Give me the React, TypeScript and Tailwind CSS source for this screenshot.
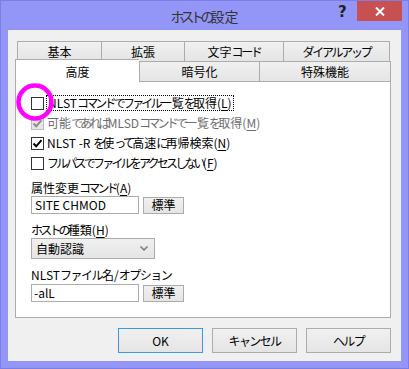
import React from "react";

const font = "font-['Noto_Sans_CJK_JP','Noto_Sans',sans-serif]";

// Meiryo UI style: kana are set narrower than kanji
const J = ({ t, k = "tracking-[-2.8px]" }: { t: string; k?: string }) => (
  <>
    {t.split(/([\u3040-\u30ff]+)/).map((s, i) =>
      i % 2 === 1 ? (
        <span key={i} className={k}>
          {s}
        </span>
      ) : (
        <React.Fragment key={i}>{s}</React.Fragment>
      )
    )}
  </>
);

const Check = ({ color = "#000" }: { color?: string }) => (
  <svg width="11" height="11" viewBox="0 0 11 11">
    <path d="M1.5 5.5 L4.2 8.3 L9.5 2.2" stroke={color} strokeWidth="2" fill="none" />
  </svg>
);

const CheckBox = ({
  checked,
  disabled,
}: {
  checked?: boolean;
  disabled?: boolean;
}) => (
  <div
    className={
      "w-[13px] h-[13px] border flex items-center justify-center shrink-0 " +
      (disabled ? "border-[#bcbcbc] bg-[#e6e6e6]" : "border-[#333333] bg-white")
    }
  >
    {checked && <Check color={disabled ? "#8d8d8d" : "#000"} />}
  </div>
);

const Key = ({ k }: { k: string }) => (
  <>
    (<span className="underline underline-offset-2">{k}</span>)
  </>
);

const SmallButton = () => (
  <button className="w-[41px] h-[17px] border border-[#acacac] bg-gradient-to-b from-[#f0f0f0] to-[#e5e5e5] text-[12px] leading-none text-black">
    標準
  </button>
);

const Tab = ({ label, w, last }: { label: string; w: string; last?: boolean }) => (
  <div
    className={
      w +
      " h-full border-t border-l border-[#acacac] bg-gradient-to-b from-[#f0f0f0] to-[#e5e5e5] flex items-center justify-center text-[12px] " +
      (last ? "border-r" : "")
    }
  >
    <J t={label} k="tracking-[-2.3px]" />
  </div>
);

const DlgButton = ({ label, focus }: { label: string; focus?: boolean }) => (
  <button
    className={
      "w-[86px] h-[25px] border bg-gradient-to-b from-[#f0f0f0] to-[#e5e5e5] text-[12px] text-black " +
      (focus ? "border-[#3c9be8]" : "border-[#acacac]")
    }
  >
    <J t={label} k="tracking-[-1.6px]" />
  </button>
);

export default function App() {
  return (
    <div
      className={
        "w-[409px] h-[369px] bg-[#9496f7] border border-[#7c7ee8] flex flex-col text-black " +
        font
      }
    >
      {/* title bar */}
      <div className="relative h-[29px] shrink-0 flex items-center justify-center">
        <span className="text-[14px] text-[#333333] leading-none">
          <J t="ホストの設定" k="tracking-[-4px]" />
        </span>
        <span className="absolute left-[337px] top-[4px] text-[15px] font-bold text-[#222222] leading-none font-['DejaVu_Sans',sans-serif]">
          ?
        </span>
        <div className="absolute right-[6px] top-0 w-[45px] h-[20px] bg-[#c75050] flex items-center justify-center">
          <svg width="10" height="9" viewBox="0 0 10 9">
            <path d="M1 0.5 L9 8.5 M9 0.5 L1 8.5" stroke="#fff" strokeWidth="2" />
          </svg>
        </div>
      </div>

      {/* client */}
      <div className="mx-[7px] mb-[7px] flex-1 bg-[#f0f0f0] pt-[11px] pl-[7px] pr-[10px] flex flex-col">
        <div className="flex ml-[2px] h-[20px]">
          <Tab label="基本" w="w-[84px]" />
          <Tab label="拡張" w="w-[83px]" />
          <Tab label="文字コード" w="w-[99px]" />
          <Tab label="ダイアルアップ" w="w-[107px]" last />
        </div>
        <div className="flex h-[20px]">
          <div className="relative z-10 w-[124px] h-[23px] -mt-[2px] bg-white border-t border-l border-[#acacac] flex items-start justify-center pt-[3px] text-[12px]">
            高度
          </div>
          <Tab label="暗号化" w="w-[120px]" />
          <Tab label="特殊機能" w="w-[132px]" last />
        </div>

        {/* panel */}
        <div className="relative h-[237px] bg-white border border-[#acacac] pt-[11px] pl-[15px] text-[12px]">
          <div className="flex items-center h-[20px] gap-[2px]">
            <CheckBox />
            <span className="border border-dotted border-black px-[1px] leading-[14px]">
              <J t="NLSTコマンドでファイル一覧を取得" />
              <Key k="L" />
            </span>
          </div>
          <div className="flex items-center h-[20px] gap-[3px] text-[#6d6d6d]">
            <CheckBox checked disabled />
            <span>
              <J t="可能であればMLSDコマンドで一覧を取得" />
              <Key k="M" />
            </span>
          </div>
          <div className="flex items-center h-[20px] gap-[3px]">
            <CheckBox checked />
            <span>
              <J t="NLST -R を使って高速に再帰検索" />
              <Key k="N" />
            </span>
          </div>
          <div className="flex items-center h-[20px] gap-[3px]">
            <CheckBox />
            <span>
              <J t="フルパスでファイルをアクセスしない" />
              <Key k="F" />
            </span>
          </div>

          <div className="mt-[7px] h-[16px] leading-[16px]">
            <J t="属性変更コマンド" />
            <Key k="A" />
          </div>
          <div className="flex items-center gap-[4px] h-[18px]">
            <div className="w-[108px] h-[18px] border border-[#abadb3] bg-white pl-[3px] leading-[16px]">
              SITE CHMOD
            </div>
            <SmallButton />
          </div>

          <div className="mt-[8px] h-[16px] leading-[16px]">
            <J t="ホストの種類" />
            <Key k="H" />
          </div>
          <div className="w-[124px] h-[21px] border border-[#acacac] bg-gradient-to-b from-[#f0f0f0] to-[#e5e5e5] flex items-center justify-between pl-[4px] pr-[6px]">
            <span>自動認識</span>
            <svg width="8" height="5" viewBox="0 0 8 5">
              <path d="M0.5 0.5 L4 4 L7.5 0.5" stroke="#7a7a7a" strokeWidth="1.5" fill="none" />
            </svg>
          </div>

          <div className="mt-[8px] h-[16px] leading-[16px]">
            <J t="NLSTファイル名/オプション" k="tracking-[-1.5px]" />
          </div>
          <div className="mt-[1px] flex items-center gap-[4px] h-[18px]">
            <div className="w-[108px] h-[18px] border border-[#abadb3] bg-white pl-[2px] leading-[16px]">
              -alL
            </div>
            <SmallButton />
          </div>

          {/* annotation ring */}
          <svg
            className="absolute left-[0px] top-[1px]"
            width="38"
            height="38"
            viewBox="0 0 38 38"
          >
            <circle cx="19" cy="19" r="16.5" stroke="#ff00ff" strokeWidth="4.5" fill="none" />
          </svg>
        </div>

        <div className="flex mt-[10px] ml-[103px] gap-[9px]">
          <DlgButton label="OK" focus />
          <DlgButton label="キャンセル" />
          <DlgButton label="ヘルプ" />
        </div>
      </div>
    </div>
  );
}
